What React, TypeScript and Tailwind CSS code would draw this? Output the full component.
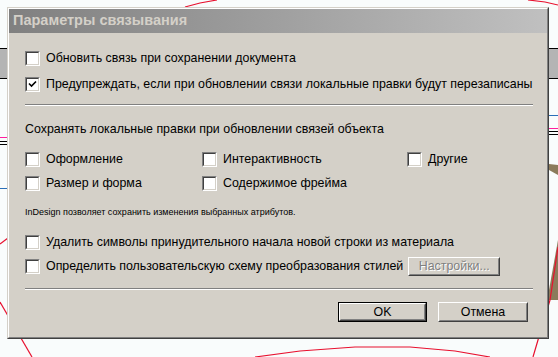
import type { ReactNode } from "react";

const font = "font-['Liberation_Sans',Arial,sans-serif]";

function Checkbox({ checked = false }: { checked?: boolean }) {
  return (
    <span className="flex size-[15px] shrink-0 border border-t-[#808080] border-l-[#808080] border-b-white border-r-white">
      <span className="flex flex-1 items-center justify-center border border-t-[#404040] border-l-[#404040] border-b-[#d4d0c8] border-r-[#d4d0c8] bg-white">
        {checked && (
          <svg width="9" height="9" viewBox="0 0 9 9">
            <path d="M1 3.5 L3.5 6 L8 1.5" stroke="#000" strokeWidth="1.6" fill="none" />
          </svg>
        )}
      </span>
    </span>
  );
}

function Option({ label, checked, className }: { label: string; checked?: boolean; className?: string }) {
  return (
    <label className={`flex h-[15px] items-center gap-[6px] whitespace-nowrap ${className ?? ""}`}>
      <Checkbox checked={checked} />
      <span className="leading-[15px]">{label}</span>
    </label>
  );
}

function Separator({ className }: { className?: string }) {
  return <div className={`h-[2px] border-t border-t-[#808080] border-b border-b-white ${className ?? ""}`} />;
}

function WinButton({ children, isDefault, disabled, className }: { children: ReactNode; isDefault?: boolean; disabled?: boolean; className?: string }) {
  return (
    <button type="button" className={`flex shrink-0 ${isDefault ? "border border-black" : ""} ${className ?? ""}`}>
      <span className="flex flex-1 border border-t-white border-l-white border-b-[#404040] border-r-[#404040]">
        <span className="flex flex-1 items-center justify-center border border-t-[#d4d0c8] border-l-[#d4d0c8] border-b-[#808080] border-r-[#808080] bg-[#d4d0c8]">
          {disabled ? (
            <span className="text-[#808080] [text-shadow:1px_1px_0_#fff]">{children}</span>
          ) : (
            <span className="text-black">{children}</span>
          )}
        </span>
      </span>
    </button>
  );
}

function Backdrop() {
  return (
    <svg className="absolute inset-0" width="558" height="357" viewBox="0 0 558 357">
      <rect width="558" height="357" fill="#f9fcfc" />
      <rect x="0" y="48" width="8" height="30" fill="#b4b4b4" />
      <rect x="549" y="48" width="9" height="30" fill="#b4b4b4" />
      <line x1="0" y1="48.5" x2="8" y2="48.5" stroke="#000" />
      <line x1="0" y1="78.5" x2="8" y2="78.5" stroke="#000" />
      <line x1="549" y1="48.5" x2="558" y2="48.5" stroke="#000" />
      <line x1="549" y1="78.5" x2="558" y2="78.5" stroke="#000" />
      <line x1="0" y1="137.5" x2="8" y2="137.5" stroke="#ff1e9e" />
      <line x1="0" y1="141.5" x2="8" y2="141.5" stroke="#000" />
      <line x1="0" y1="144.5" x2="8" y2="144.5" stroke="#000" />
      <line x1="0" y1="188.5" x2="8" y2="188.5" stroke="#2a6fb8" />
      <line x1="549" y1="115.5" x2="558" y2="115.5" stroke="#2a6fb8" />
      <line x1="549" y1="128.5" x2="558" y2="128.5" stroke="#ff1e9e" />
      <line x1="549" y1="131.5" x2="558" y2="131.5" stroke="#000" />
      <line x1="549" y1="134.5" x2="558" y2="134.5" stroke="#000" />
      <polygon points="549,164 558,165 558,175 549,170" fill="#8b7b5b" />
      <polygon points="558,240 558,300 549,300 549,290" fill="#8b7b5b" />
      <g stroke="#e8102e" strokeWidth="1.2" fill="none">
        <polyline points="185,7 200,3 217,0" />
        <polyline points="528,0 545,2 558,5" />
        <line x1="0" y1="244" x2="8" y2="238" />
        <polyline points="0,302 32,357" />
        <polyline points="558,247 550,300 538,340 533,357" />
        <polyline points="255,357 300,351 355,347 410,347 455,351 490,357" />
      </g>
    </svg>
  );
}

export default function App() {
  return (
    <div className={`relative h-[357px] w-[558px] overflow-hidden text-[12.4px] text-black ${font}`}>
      <Backdrop />
      <div className="relative pl-[7px] pt-[7px]">
        <div className="flex h-[332px] w-[542px] border border-t-[#d4d0c8] border-l-[#d4d0c8] border-b-[#404040] border-r-[#404040]">
          <div className="flex min-w-0 flex-1 flex-col border border-t-white border-l-white border-b-[#808080] border-r-[#808080] bg-[#d4d0c8]">
            <div className="flex h-[24px] items-center bg-gradient-to-r from-[#808080] to-[#c0c0c0] pl-[4px] text-[14.5px] font-bold text-[#d4d0c8]">
              Параметры связывания
            </div>

            <div className="flex flex-1 flex-col pl-[16px] pr-[14px]">
              <Option className="mt-[18px]" label="Обновить связь при сохранении документа" />
              <Option className="mt-[11px]" checked label="Предупреждать, если при обновлении связи локальные правки будут перезаписаны" />
              <Separator className="mt-[12px]" />

              <div className="mt-[16px] h-[15px] leading-[15px]">Сохранять локальные правки при обновлении связей объекта</div>

              <div className="mt-[15px] flex">
                <Option className="w-[177px]" label="Оформление" />
                <Option className="w-[205px]" label="Интерактивность" />
                <Option label="Другие" />
              </div>
              <div className="mt-[9px] flex">
                <Option className="w-[177px]" label="Размер и форма" />
                <Option label="Содержимое фрейма" />
              </div>

              <div className="mt-[15px] h-[13px] text-[9px] leading-[13px]">InDesign позволяет сохранить изменения выбранных атрибутов.</div>

              <Option className="mt-[16px]" label="Удалить символы принудительного начала новой строки из материала" />
              <div className="mt-[9px] flex h-[15px] items-center gap-[5px]">
                <Option label="Определить пользовательскую схему преобразования стилей" />
                <WinButton disabled className="h-[19px] w-[92px]">Настройки...</WinButton>
              </div>

              <Separator className="mt-[14px]" />

              <div className="mt-[12px] flex justify-end gap-[11px] pr-[5px]">
                <WinButton isDefault className="h-[20px] w-[89px]">OK</WinButton>
                <WinButton className="h-[20px] w-[90px]">Отмена</WinButton>
              </div>
            </div>
          </div>
        </div>
      </div>
    </div>
  );
}
